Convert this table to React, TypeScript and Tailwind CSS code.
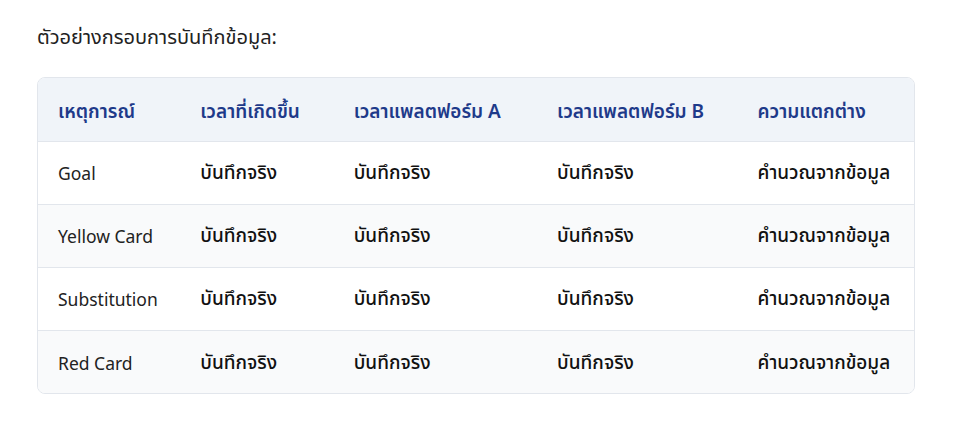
const rows = ["Goal", "Yellow Card", "Substitution", "Red Card"]
const heads = ["เหตุการณ์", "เวลาที่เกิดขึ้น", "เวลาแพลตฟอร์ม A", "เวลาแพลตฟอร์ม B", "ความแตกต่าง"]
const widths = ["w-[142px]", "w-[153px]", "w-[203px]", "w-[200px]", "w-[176px]"]

export default function App() {
  return (
    <div className="min-h-screen bg-white px-[37px] pt-[22px] font-['Noto_Sans','Noto_Sans_Thai',sans-serif] text-[#1f2937]">
      <p className="text-[20px] leading-[30px] text-[#222]">ตัวอย่างกรอบการบันทึกข้อมูล:</p>
      <div className="mt-[25px] w-[878px] overflow-hidden rounded-[8px] border border-[#e2e6ec]">
        <table className="w-full table-fixed border-collapse">
          <thead>
            <tr className="h-[63px] bg-[#f0f4f9]">
              {heads.map((h, i) => (
                <th key={h} className={`${widths[i]} px-[20px] pt-[3px] text-left text-[19px] font-semibold text-[#1e3a8a]`}>
                  {h}
                </th>
              ))}
            </tr>
          </thead>
          <tbody>
            {rows.map((r, i) => (
              <tr key={r} className={`h-[63px] border-t border-[#e2e6ec] ${i % 2 === 1 ? "bg-[#f9fafb]" : "bg-white"}`}>
                <td className="px-[20px] pt-[2px] text-[17.5px] text-[#222]">{r}</td>
                <td className="px-[20px] text-[19px] font-medium text-[#111]">บันทึกจริง</td>
                <td className="px-[20px] text-[19px] font-medium text-[#111]">บันทึกจริง</td>
                <td className="px-[20px] text-[19px] font-medium text-[#111]">บันทึกจริง</td>
                <td className="px-[20px] text-[19px] font-medium text-[#111]">คำนวณจากข้อมูล</td>
              </tr>
            ))}
          </tbody>
        </table>
      </div>
    </div>
  )
}
